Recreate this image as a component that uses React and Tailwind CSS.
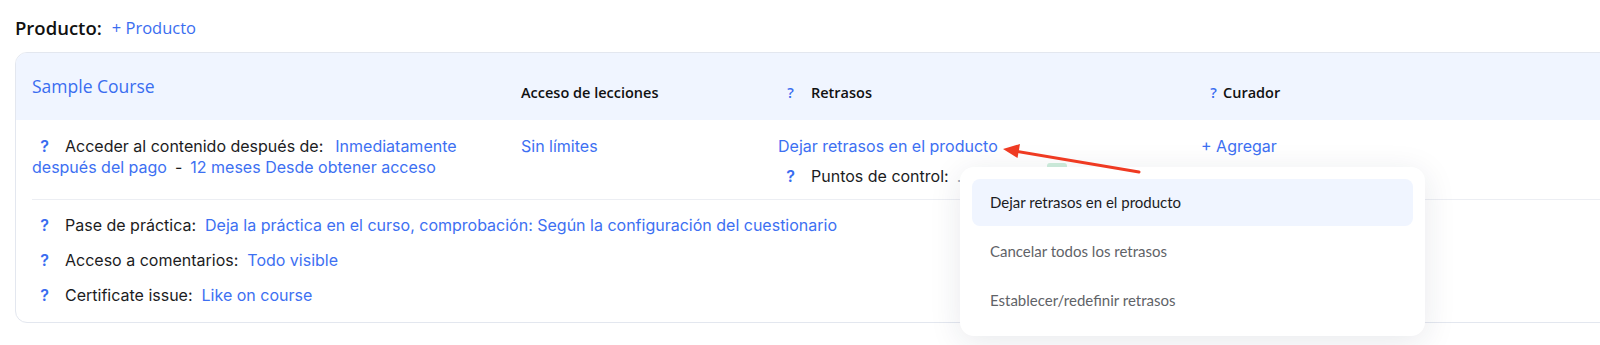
import React from 'react';

const Q = () => (
  <span className="inline-block w-[25px] text-center font-semibold text-[#3a6df0]">?</span>
);

const Link = ({ children, className = '' }) => (
  <span className={`text-[#3d70f2] ${className}`}>{children}</span>
);

const menuItems = [
  { label: 'Dejar retrasos en el producto', active: true },
  { label: 'Cancelar todos los retrasos' },
  { label: 'Establecer/redefinir retrasos' },
];

export default function App() {
  return (
    <div className="relative w-[1600px] h-[345px] overflow-hidden bg-white font-['Inter',sans-serif] text-[16px] text-[#1c1c1e]">
      <div className="pl-[15px] pt-[17px]">
        <div className="flex items-center h-[22px] font-['Open_Sans',sans-serif]">
          <span className="text-[18.5px] font-semibold text-[#111]">Producto:</span>
          <span className="ml-[10px] text-[16.5px] text-[#3a6df0]">+ Producto</span>
        </div>

        <div className="mt-[13px] w-[1640px] rounded-[12px] border border-[#e3e7ef] overflow-hidden">
          {/* header band */}
          <div className="grid h-[67px] grid-cols-[489px_257px_423px_1fr] items-center bg-[#f0f5ff] pl-4 font-['Open_Sans',sans-serif]">
            <div className="text-[17.5px] text-[#3a6df0]">Sample Course</div>
            <div className="mt-3 text-[14.5px] font-semibold text-[#111]">Acceso de lecciones</div>
            <div className="mt-3 flex items-center text-[14.5px] font-semibold text-[#111]">
              <Q />
              <span className="ml-2">Retrasos</span>
            </div>
            <div className="mt-3 flex items-center text-[14.5px] font-semibold text-[#111]">
              <Q />
              <span className="ml-[-3px]">Curador</span>
            </div>
          </div>

          <div className="ml-4">
            {/* first row */}
            <div className="grid grid-cols-[489px_257px_423px_1fr] border-b border-[#eceef3] pt-4 pb-3 leading-[21px]">
              <div className="pr-8">
                <Q />
                <span className="ml-2">Acceder al contenido después de:</span>
                <Link className="ml-[12px]">Inmediatamente después del pago</Link>
                <span className="mx-[8px]">-</span>
                <Link>12 meses Desde obtener acceso</Link>
              </div>
              <div>
                <Link>Sin límites</Link>
              </div>
              <div>
                <Link>Dejar retrasos en el producto</Link>
                <div className="mt-[9px] flex items-center">
                  <Q />
                  <span className="ml-2">Puntos de control:</span>
                  <span className="ml-2 text-[#9ca3af]">.</span>
                </div>
              </div>
              <div>
                <Link>+ Agregar</Link>
              </div>
            </div>

            {/* second row */}
            <div className="flex flex-col gap-[14px] pt-[15px] pb-4 leading-[21px]">
              <div>
                <Q />
                <span className="ml-2">Pase de práctica:</span>
                <Link className="ml-[9px]">Deja la práctica en el curso, comprobación: Según la configuración del cuestionario</Link>
              </div>
              <div>
                <Q />
                <span className="ml-2">Acceso a comentarios:</span>
                <Link className="ml-[9px]">Todo visible</Link>
              </div>
              <div>
                <Q />
                <span className="ml-2">Certificate issue:</span>
                <Link className="ml-[9px]">Like on course</Link>
              </div>
            </div>
          </div>
        </div>
      </div>

      {/* badge partly hidden under the menu */}
      <div className="absolute left-[1047px] top-[163px] h-[12px] w-[20px] rounded-[3px] bg-[#cfeedd]" />

      {/* dropdown menu */}
      <div className="absolute left-[960px] top-[167px] flex w-[465px] flex-col gap-[2px] rounded-[14px] bg-white p-3 shadow-[0_6px_32px_rgba(30,40,70,0.1)] font-['Lato',sans-serif] text-[15px]">
        {menuItems.map((item) => (
          <div
            key={item.label}
            className={`flex h-[47px] items-center rounded-[8px] px-[18px] ${
              item.active ? 'bg-[#f0f5ff] text-[#1c1c1e]' : 'text-[#5f6368]'
            }`}
          >
            {item.label}
          </div>
        ))}
      </div>

      {/* annotation arrow, drawn over the menu */}
      <svg className="absolute left-[995px] top-[140px]" width="150" height="40" viewBox="0 0 150 40">
        <line x1="20" y1="11" x2="144" y2="32" stroke="#ef3a22" strokeWidth="3" strokeLinecap="round" />
        <polygon points="8,9 25,4 22.5,18" fill="#ef3a22" />
      </svg>
    </div>
  );
}
